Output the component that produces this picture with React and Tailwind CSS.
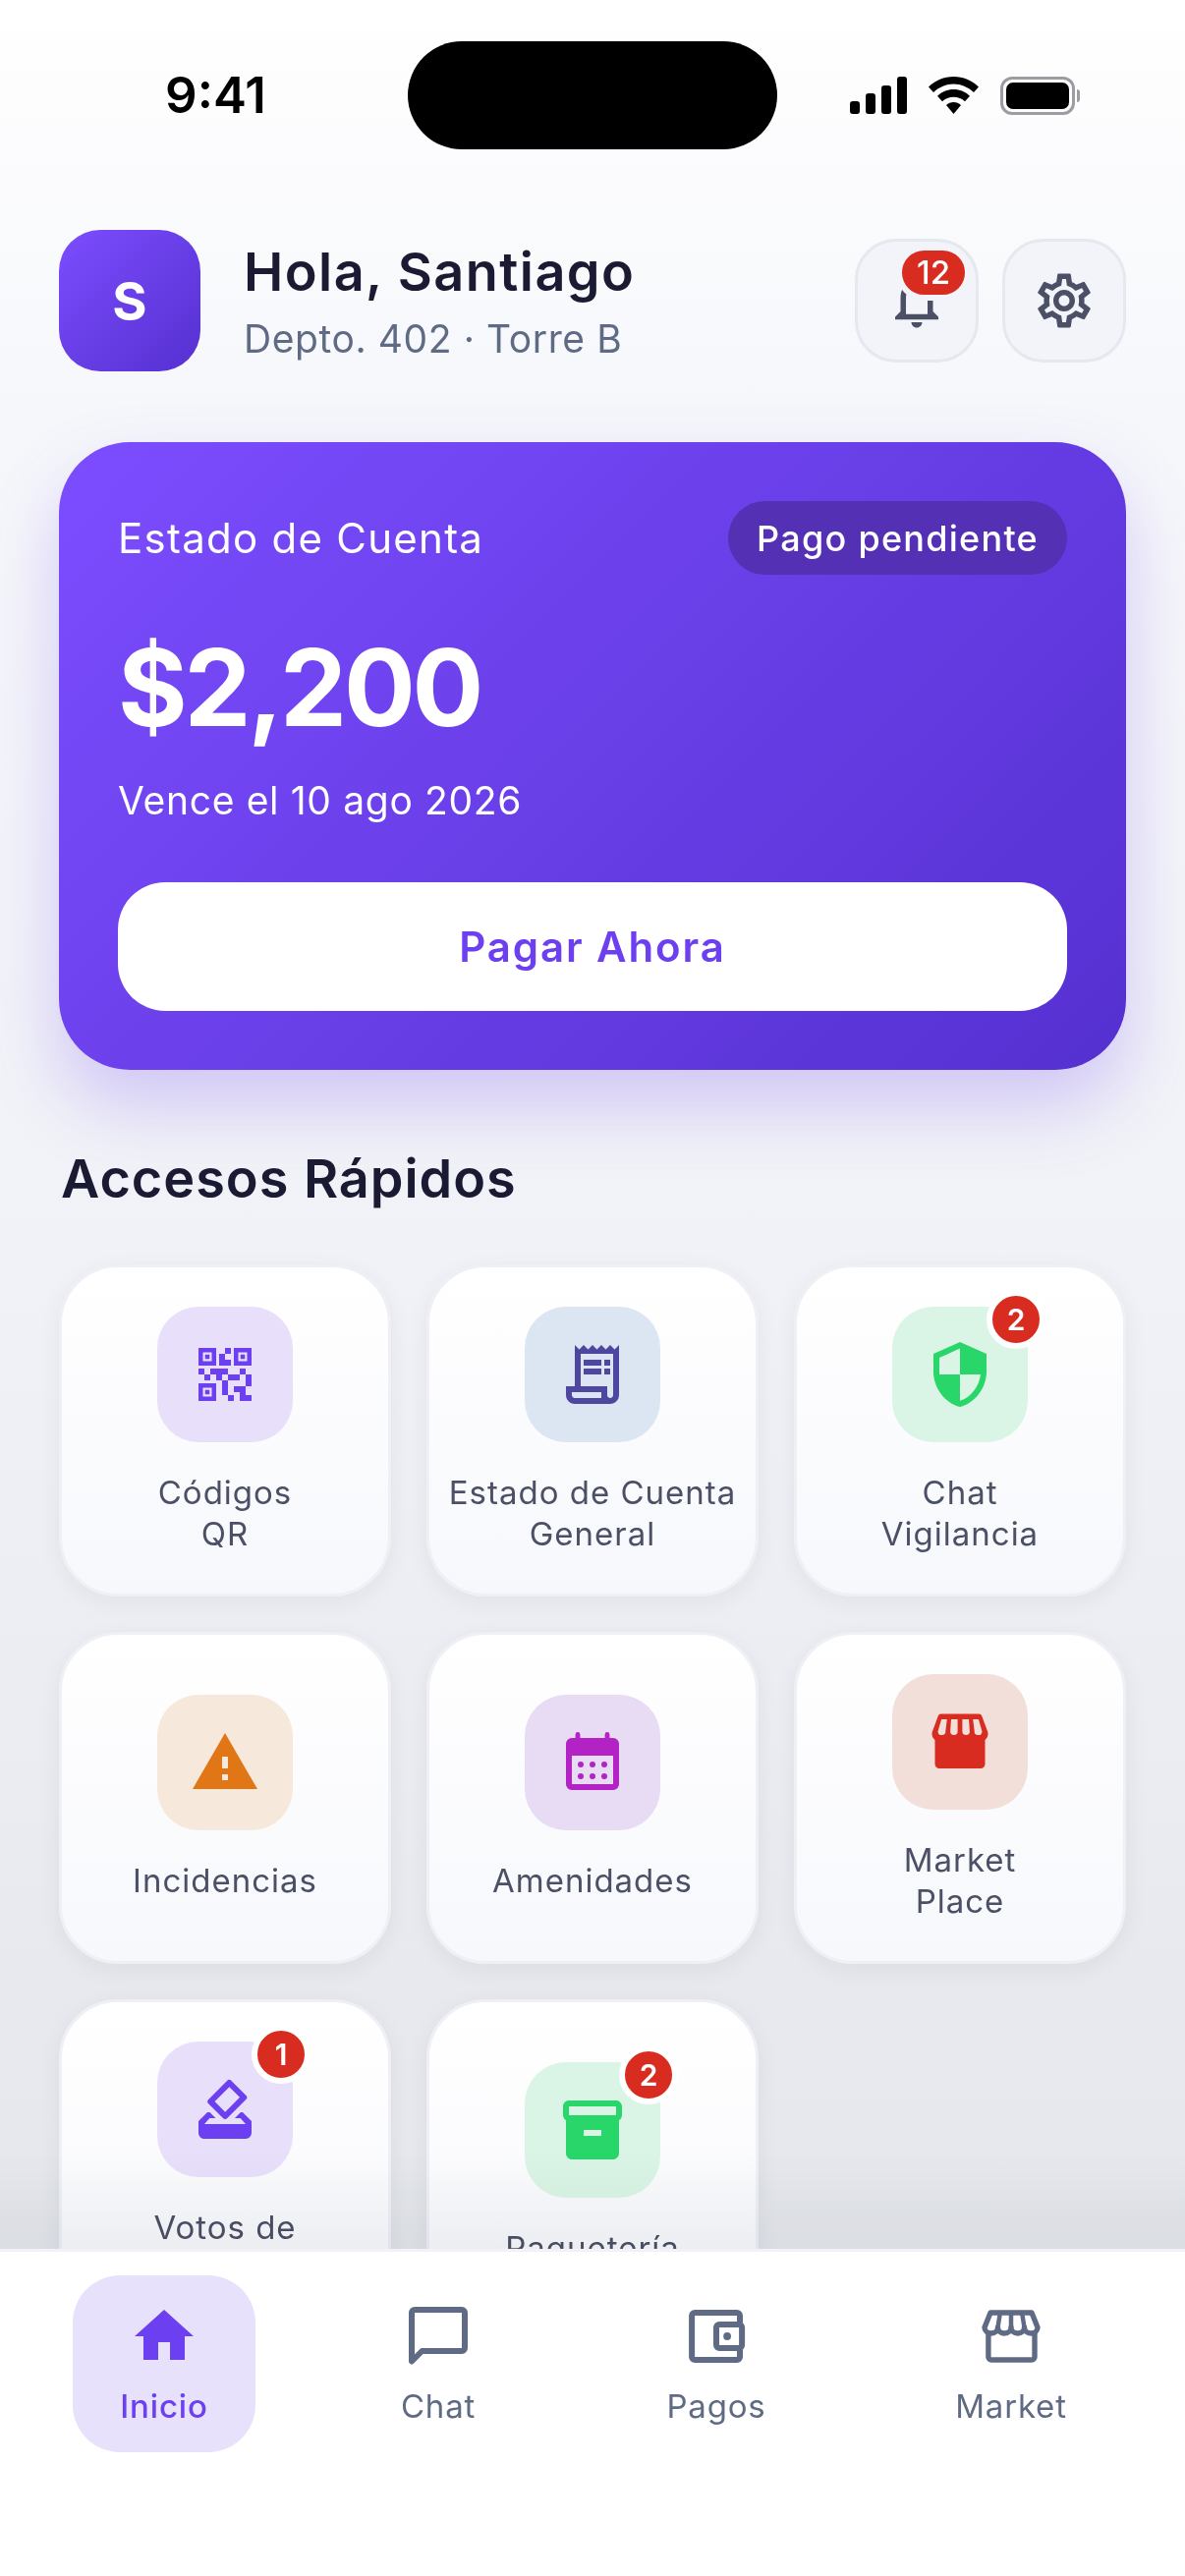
import React from 'react'
import {
  MdQrCode2, MdOutlineReceiptLong, MdSecurity, MdWarning,
  MdHowToVote, MdInventory2, MdHome, MdOutlineNotifications, MdOutlineSettings,
} from 'react-icons/md'

function ShopFilled({ className }) {
  return (
    <svg className={className} viewBox="0 0 24 24" fill="currentColor" fillRule="evenodd">
      <path d="M5.600 2.500H18.400a1 1 0 0 1 1 .7L21.400 8.600c.3 1.100-.1 2.100-.9 2.700V19.500a1.500 1.500 0 0 1-1.500 1.500H5a1.500 1.500 0 0 1-1.500-1.500V11.300c-.8-.6-1.200-1.600-.9-2.700L4.600 3.200a1 1 0 0 1 1-.7zM5.700 4.300H7.600L7.100 8.300a1.300 1.300 0 0 1-2.600.2zM9 4.300H11.200V8.400a1.250 1.250 0 0 1-2.500 0zM12.800 4.300H15L15.300 8.400a1.250 1.250 0 0 1-2.500 0zM16.400 4.300H18.300L19.500 8.500a1.300 1.300 0 0 1-2.600-.2z" />
    </svg>
  )
}

function ShopOutline({ className }) {
  return (
    <svg className={className} viewBox="0 0 24 24" fill="none" stroke="currentColor" strokeWidth="1.800" strokeLinejoin="round">
      <path d="M5 4H19L21 9A2.250 2 0 0 1 16.500 9A2.250 2 0 0 1 12 9A2.250 2 0 0 1 7.500 9A2.250 2 0 0 1 3 9Z" />
      <path d="M8.300 4L7.500 9M12 4V9M15.700 4L16.500 9" strokeWidth="1.500" />
      <path d="M4.300 11V19a1 1 0 0 0 1 1H19a1 1 0 0 0 1-1V11" />
    </svg>
  )
}

function CalendarDots({ className }) {
  return (
    <svg className={className} viewBox="0 0 24 24" fill="currentColor" fillRule="evenodd">
      <path d="M6.200 2.500a.8.8 0 0 1 1.600 0V3.700H16.200V2.500a.8.800 0 0 1 1.600 0V3.700H19a2 2 0 0 1 2 2V19.300a2 2 0 0 1-2 2H5a2 2 0 0 1-2-2V5.700a2 2 0 0 1 2-2H6.200zM5 9.700V19.300H19V9.700z" />
      <circle cx="8" cy="12.700" r="1" />
      <circle cx="12" cy="12.700" r="1" />
      <circle cx="16" cy="12.700" r="1" />
      <circle cx="8" cy="16.700" r="1" />
      <circle cx="12" cy="16.700" r="1" />
      <circle cx="16" cy="16.700" r="1" />
    </svg>
  )
}

function ChatSquare({ className }) {
  return (
    <svg className={className} viewBox="0 0 24 24" fill="none" stroke="currentColor" strokeWidth="2" strokeLinejoin="round">
      <path d="M4 3H20a1 1 0 0 1 1 1V16a1 1 0 0 1-1 1H6.500L3 20.500V4a1 1 0 0 1 1-1z" />
    </svg>
  )
}

function WalletOutline({ className }) {
  return (
    <svg className={className} viewBox="0 0 24 24" fill="none" stroke="currentColor" strokeWidth="2" strokeLinejoin="round">
      <path d="M20 7.500V5a1 1 0 0 0-1-1H4.700a1 1 0 0 0-1 1V19a1 1 0 0 0 1 1H19a1 1 0 0 0 1-1V16.500" />
      <rect x="12" y="8" width="8.700" height="8" rx="1" />
      <circle cx="15.700" cy="12" r="1.300" fill="currentColor" stroke="none" />
    </svg>
  )
}

const tiles = [
  { lines: ['Códigos', 'QR'], Icon: MdQrCode2, box: 'bg-[#e8e0fa]', color: 'text-[#6c3ff0]' },
  { lines: ['Estado de Cuenta', 'General'], Icon: MdOutlineReceiptLong, box: 'bg-[#dce6f2]', color: 'text-[#4f479f]' },
  { lines: ['Chat', 'Vigilancia'], Icon: MdSecurity, box: 'bg-[#daf5e5]', color: 'text-[#28d66a]', badge: 2 },
  { lines: ['Incidencias'], Icon: MdWarning, box: 'bg-[#f6e8da]', color: 'text-[#e07616]' },
  { lines: ['Amenidades'], Icon: CalendarDots, box: 'bg-[#e8dcf5]', color: 'text-[#b322c4]' },
  { lines: ['Market', 'Place'], Icon: ShopFilled, box: 'bg-[#f3dfd9]', color: 'text-[#d72c1f]' },
  { lines: ['Votos de', 'Asamblea'], Icon: MdHowToVote, box: 'bg-[#e8e0fa]', color: 'text-[#6c3ff0]', badge: 1 },
  { lines: ['Paquetería'], Icon: MdInventory2, box: 'bg-[#daf5e5]', color: 'text-[#28d66a]', badge: 2 },
]

const navItems = [
  { label: 'Inicio', Icon: MdHome, active: true, width: 'w-[186px]' },
  { label: 'Chat', Icon: ChatSquare, width: 'w-[172px]' },
  { label: 'Pagos', Icon: WalletOutline, width: 'w-[194px]' },
  { label: 'Market', Icon: ShopOutline, width: 'w-[206px]' },
]

function StatusIcons() {
  return (
    <div className="flex items-center justify-end gap-[22px] pr-[107px]">
      <svg width="58" height="38" viewBox="0 0 58 38" fill="#000">
        <rect x="0" y="25" width="10" height="13" rx="3" />
        <rect x="16" y="17" width="10" height="21" rx="3" />
        <rect x="32" y="9" width="10" height="29" rx="3" />
        <rect x="48" y="0" width="10" height="38" rx="3" />
      </svg>
      <svg width="51" height="38" viewBox="0 0 51 38" fill="#000">
        <path d="M25.500 0C15.600 0 7 3.800 0 10.500l5 5.500C11 10.500 18 7.500 25.500 7.500S40 10.500 46 16l5-5.500C44 3.800 35.400 0 25.500 0z" />
        <path d="M25.500 13c-6.500 0-12 2.400-16.500 6.700l5 5.500c3-2.800 7-4.500 11.500-4.500s8.500 1.700 11.500 4.500l5-5.500C37.500 15.400 32 13 25.500 13z" />
        <path d="M25.500 26c-3 0-5.500 1-7.500 3l7.500 9 7.500-9c-2-2-4.500-3-7.500-3z" />
      </svg>
      <div className="flex items-center gap-[2px]">
        <div className="w-[76px] h-[39px] rounded-[12px] border-[3px] border-[#9c9ca3] p-[3px]">
          <div className="w-full h-full rounded-[7px] bg-black" />
        </div>
        <div className="w-[3px] h-[13px] rounded-r-[3px] bg-[#9c9ca3]" />
      </div>
    </div>
  )
}

function Tile({ lines, Icon, box, color, badge }) {
  return (
    <div className="aspect-square rounded-[60px] border-[3px] border-[#eef0f5] bg-gradient-to-b from-white to-[#f7f8fc] shadow-[0_6px_24px_rgba(30,30,60,0.06)] flex flex-col items-center justify-center gap-[30px]">
      <div className={`relative w-[138px] h-[138px] rounded-[42px] flex items-center justify-center ${box}`}>
        <Icon className={`w-[72px] h-[72px] ${color}`} />
        {badge && (
          <div className="absolute -top-[17px] -right-[18px] w-[60px] h-[60px] rounded-full bg-[#d72c1f] border-[6px] border-white flex items-center justify-center text-white text-[30px] font-semibold">
            {badge}
          </div>
        )}
      </div>
      <div className="text-center text-[33px] leading-[42px] tracking-[0.03em] text-[#4b5066]">
        {lines.map((line) => (
          <div key={line}>{line}</div>
        ))}
      </div>
    </div>
  )
}

export default function App() {
  return (
    <div className="w-[1206px] h-[2622px] overflow-hidden flex flex-col bg-[linear-gradient(180deg,#ffffff_0px,#f6f7fb_420px,#f1f2f7_1270px,#edeef3_1650px,#e7e9ee_2020px,#e6e8ed_2290px)] font-['Inter',sans-serif]">
      <div className="relative flex-1 min-h-0 overflow-hidden">
        <div className="grid grid-cols-[415px_376px_415px] pt-[42px] items-center">
          <div className="pl-[24px] text-center text-[51px] font-semibold text-black">9:41</div>
          <div className="h-[110px] rounded-[55px] bg-black" />
          <StatusIcons />
        </div>

        <div className="px-[60px] mt-[82px] flex items-center">
          <div className="w-[144px] h-[144px] rounded-[42px] bg-[linear-gradient(135deg,#7c4dff,#5530d0)] flex items-center justify-center text-white text-[54px] font-bold">
            S
          </div>
          <div className="ml-[44px] flex-1">
            <div className="text-[54px] leading-[66px] font-[590] tracking-[0.027em] text-[#1a1b33]">Hola, Santiago</div>
            <div className="mt-[11px] text-[39px] leading-[48px] tracking-[0.015em] text-[#5f6b85]">Depto. 402 · Torre B</div>
          </div>
          <div className="flex gap-[24px]">
            <button className="relative w-[126px] h-[126px] rounded-[42px] bg-[#f3f4f9] border-[3px] border-[#e6e8ef] flex items-center justify-center">
              <MdOutlineNotifications className="w-[66px] h-[66px] text-[#4b5066]" />
              <span className="absolute top-[3px] left-[39px] h-[57px] px-[15px] rounded-full bg-[#d72c1f] border-[6px] border-[#f3f4f9] flex items-center text-white text-[33px] font-medium">
                12
              </span>
            </button>
            <button className="w-[126px] h-[126px] rounded-[42px] bg-[#f3f4f9] border-[3px] border-[#e6e8ef] flex items-center justify-center">
              <MdOutlineSettings className="w-[66px] h-[66px] text-[#4b5066]" />
            </button>
          </div>
        </div>

        <div className="mx-[60px] mt-[72px] h-[639px] rounded-[72px] p-[60px] bg-[linear-gradient(135deg,#7c4dff,#5530d0)] shadow-[0_36px_72px_rgba(108,63,240,0.25)]">
          <div className="flex items-center justify-between">
            <div className="text-[42px] tracking-[0.03em] text-white">Estado de Cuenta</div>
            <div className="h-[75px] px-[29px] rounded-full bg-[#5330b4] flex items-center text-white text-[36px] font-medium tracking-[0.035em]">
              Pago pendiente
            </div>
          </div>
          <div className="mt-[50px] text-[108px] leading-[130px] font-bold tracking-[-0.03em] text-white">$2,200</div>
          <div className="mt-[23px] text-[39px] leading-[54px] tracking-[0.017em] text-white">Vence el 10 ago 2026</div>
          <button className="mt-[56px] w-full h-[131px] rounded-[48px] bg-white text-[#6c3ff0] text-[42px] font-[580] tracking-[0.045em]">
            Pagar Ahora
          </button>
        </div>

        <div className="px-[62px] mt-[78px] text-[54px] leading-[66px] font-[590] tracking-[0.018em] text-[#1a1b33]">
          Accesos Rápidos
        </div>

        <div className="mx-[60px] mt-[54px] grid grid-cols-3 gap-[36px]">
          {tiles.map((tile) => (
            <Tile key={tile.lines[0]} {...tile} />
          ))}
        </div>

        <div className="absolute bottom-0 inset-x-0 h-[100px] bg-gradient-to-b from-white to-[#f2f3f4] mix-blend-multiply" />
      </div>

      <div className="h-[333px] shrink-0 bg-white border-t-[3px] border-[#f1f2f7] px-[24px] pt-[24px] flex items-start justify-around">
        {navItems.map(({ label, Icon, active, width }) => (
          <div
            key={label}
            className={`h-[180px] rounded-[48px] flex flex-col items-center justify-center gap-[14px] ${width} ${active ? 'bg-[#e8e1fb] text-[#6c3ff0]' : 'text-[#5f6b85]'}`}
          >
            <Icon className="w-[72px] h-[72px]" />
            <span className={`text-[33px] leading-[42px] tracking-[0.025em] ${active ? 'font-medium' : ''}`}>{label}</span>
          </div>
        ))}
      </div>
    </div>
  )
}
